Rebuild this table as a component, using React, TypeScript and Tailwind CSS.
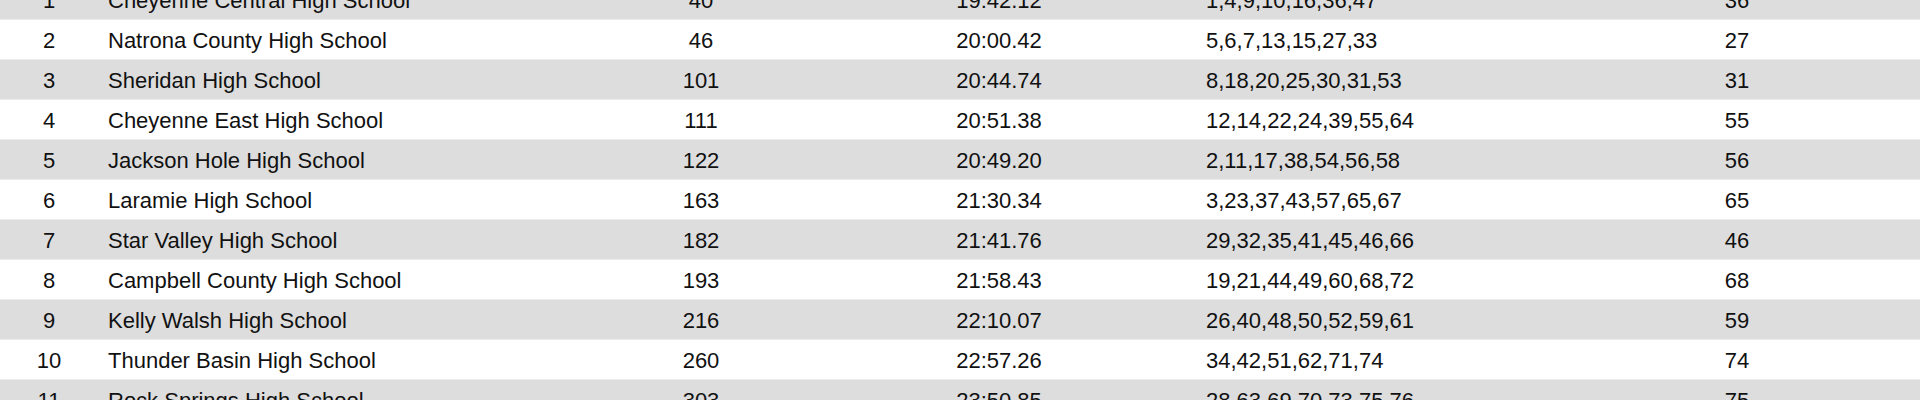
const rows = [
  { place: 1, school: "Cheyenne Central High School", points: 40, time: "19:42.12", splits: "1,4,9,10,16,36,47", sixth: 36 },
  { place: 2, school: "Natrona County High School", points: 46, time: "20:00.42", splits: "5,6,7,13,15,27,33", sixth: 27 },
  { place: 3, school: "Sheridan High School", points: 101, time: "20:44.74", splits: "8,18,20,25,30,31,53", sixth: 31 },
  { place: 4, school: "Cheyenne East High School", points: 111, time: "20:51.38", splits: "12,14,22,24,39,55,64", sixth: 55 },
  { place: 5, school: "Jackson Hole High School", points: 122, time: "20:49.20", splits: "2,11,17,38,54,56,58", sixth: 56 },
  { place: 6, school: "Laramie High School", points: 163, time: "21:30.34", splits: "3,23,37,43,57,65,67", sixth: 65 },
  { place: 7, school: "Star Valley High School", points: 182, time: "21:41.76", splits: "29,32,35,41,45,46,66", sixth: 46 },
  { place: 8, school: "Campbell County High School", points: 193, time: "21:58.43", splits: "19,21,44,49,60,68,72", sixth: 68 },
  { place: 9, school: "Kelly Walsh High School", points: 216, time: "22:10.07", splits: "26,40,48,50,52,59,61", sixth: 59 },
  { place: 10, school: "Thunder Basin High School", points: 260, time: "22:57.26", splits: "34,42,51,62,71,74", sixth: 74 },
  { place: 11, school: "Rock Springs High School", points: 303, time: "23:50.85", splits: "28,63,69,70,73,75,76", sixth: 75 },
];

export default function App() {
  return (
    <div className="h-[400px] w-full overflow-hidden bg-white font-['Liberation_Sans',Arial,sans-serif] text-[22px] text-[#111111]">
      <div className="-mt-[20px]">
        {rows.map((r, i) => (
          <div
            key={r.place}
            className={`grid h-[40px] grid-cols-[98px_504px_198px_398px_438px_202px_1fr] items-center border-b border-[#ebebeb] pt-[2px] ${
              i % 2 === 0 ? "bg-[#dddddd]" : "bg-white"
            }`}
          >
            <span className="text-center">{r.place}</span>
            <span className="pl-[10px] whitespace-nowrap">{r.school}</span>
            <span className="text-center">{r.points}</span>
            <span className="text-center">{r.time}</span>
            <span className="pl-[8px] whitespace-nowrap">{r.splits}</span>
            <span className="text-center">{r.sixth}</span>
            <span />
          </div>
        ))}
      </div>
    </div>
  );
}
